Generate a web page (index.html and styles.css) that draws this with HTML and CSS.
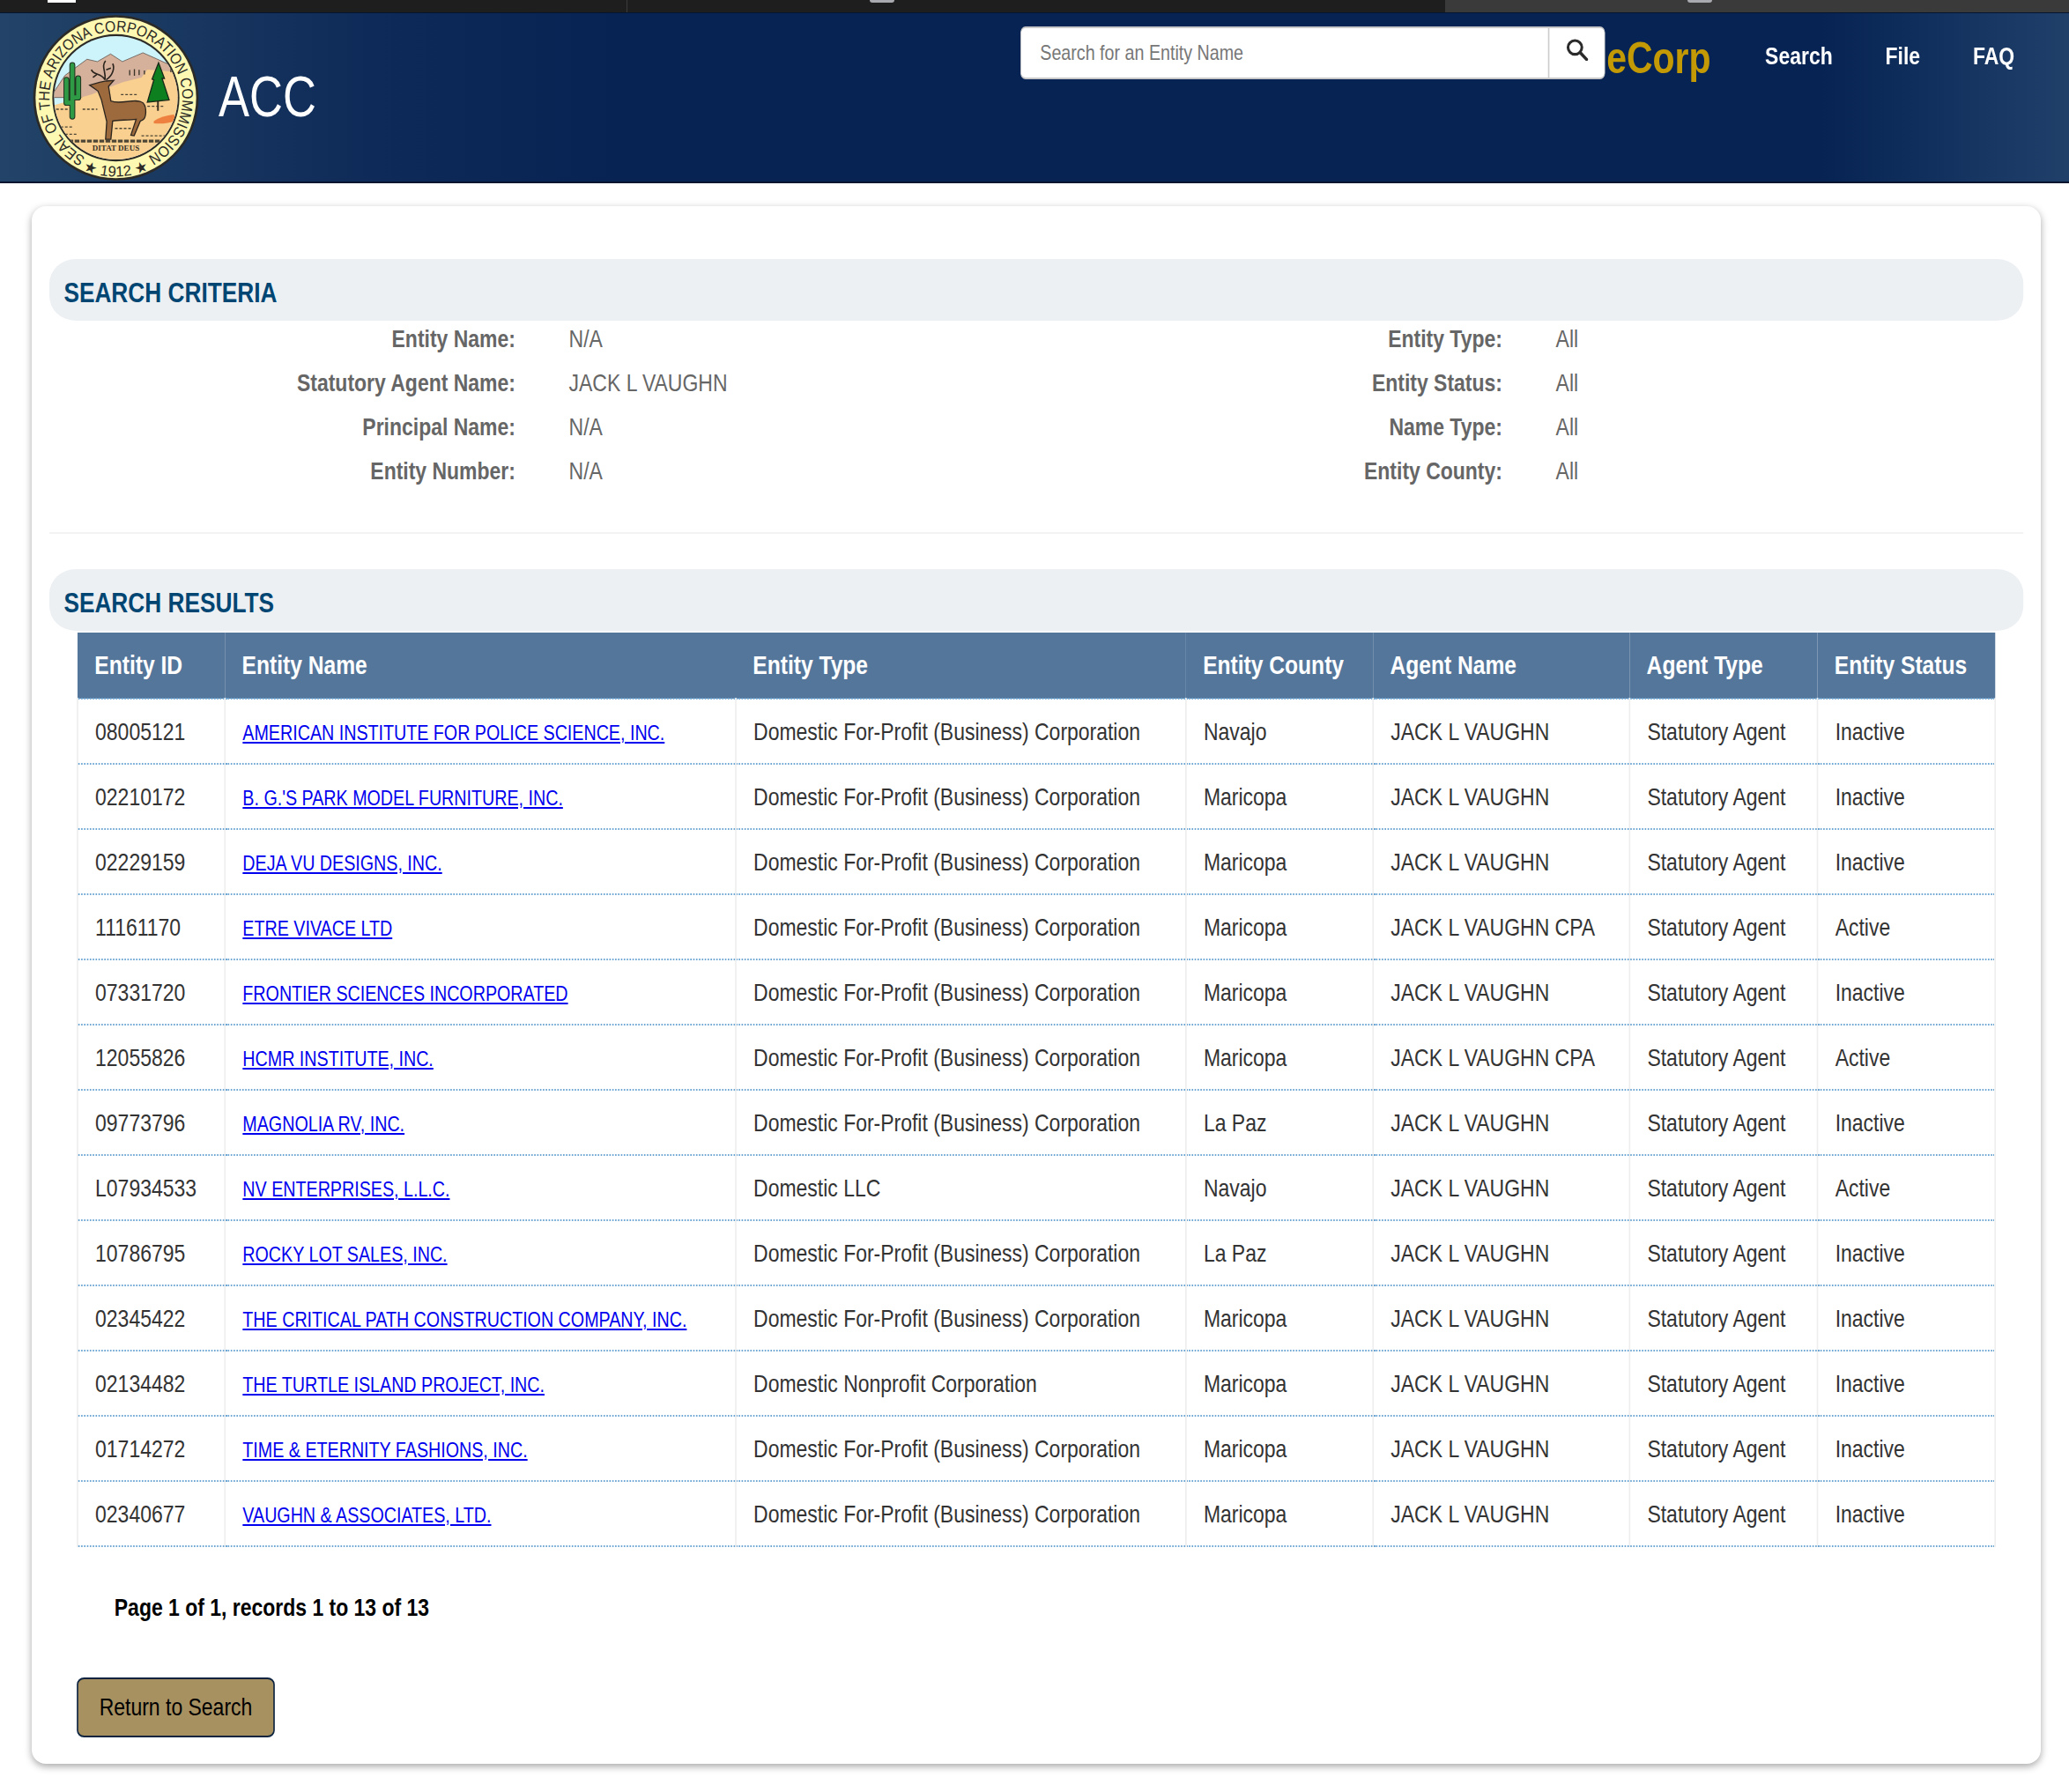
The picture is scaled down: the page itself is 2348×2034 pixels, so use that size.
FILE: index.html
```html
<!DOCTYPE html>
<html lang="en">
<head>
    <meta charset="UTF-8">
    <meta name="viewport" content="width=device-width, initial-scale=1.0">
    <title>ACC eCorp - Search Results</title>
    <link rel="stylesheet" href="styles.css">
</head>
<body>
    <div class="tabstrip">
        <div class="tab tab-first"><span class="tab-icon tab-icon-white"></span></div>
        <div class="tab tab-second"><span class="tab-icon"></span></div>
        <div class="tab tab-third"><span class="tab-icon"></span></div>
    </div>

    <header class="site-header">
        <svg class="seal" viewBox="50 20 566 562" aria-label="Seal of the Arizona Corporation Commission">
            <defs>
                <path id="ringTop" d="M 230 503 A 226 226 0 1 1 436 503"></path>
                <path id="ringBottom" d="M 199 533 A 268 268 0 0 0 467 533"></path>
                <clipPath id="scene"><circle cx="333" cy="301" r="210"></circle></clipPath>
            </defs>
            <circle cx="333" cy="301" r="281" fill="#2b2a26"></circle>
            <circle cx="333" cy="301" r="273" fill="#fdf8b2"></circle>
            <circle cx="333" cy="301" r="216" fill="#2b2a26"></circle>
            <g clip-path="url(#scene)">
                <rect x="100" y="80" width="470" height="450" fill="#cdf3fb"></rect>
                <path d="M110 300 L160 225 L235 170 L270 178 L315 152 L355 178 L425 148 L470 168 L540 200 L560 300 Z" fill="#d5b19c" stroke="#4a3b33" stroke-width="2"></path>
                <path d="M110 330 L250 290 L350 250 L440 205 L560 215 L560 530 L110 530 Z" fill="#f9d08f"></path>
                <path d="M300 262 L420 232 L440 205 L400 215 L340 235 Z" fill="#d5b19c"></path>
                <path d="M380 225v-18M396 226v-22M412 224v-18M430 222v-14M520 214v-14" stroke="#3a3428" stroke-width="4"></path>
                <path d="M130 400h60M330 405h60M130 425h70M420 430h90M350 290h60M440 330h60M130 340h40M220 340h50" stroke="#4d4535" stroke-width="4" stroke-dasharray="9 6"></path>
                <path d="M130 448 H540" stroke="#4d4535" stroke-width="10" stroke-dasharray="16 5"></path>
                <path d="M185 365 V190 M185 318 H165 V240 M185 300 H205 V235" fill="none" stroke="#22301f" stroke-width="20" stroke-linecap="round" stroke-linejoin="round"></path>
                <path d="M185 365 V190 M185 318 H165 V240 M185 300 H205 V235" fill="none" stroke="#2e9a46" stroke-width="14" stroke-linecap="round" stroke-linejoin="round"></path>
                <path d="M476 345 V300" stroke="#3b2f22" stroke-width="6"></path>
                <path d="M478 182 L498 235 L490 235 L514 308 L440 316 L462 240 L456 238 Z" fill="#0d7f1f" stroke="#1b2a18" stroke-width="4"></path>
                <path d="M462 380 Q490 362 530 358 L540 378 Q500 392 462 388 Z" fill="#ee8140"></path>
                <path d="M296 240 C282 215 255 225 250 205 M296 240 C300 210 282 195 298 175 M300 240 C322 225 330 200 322 185 M268 222 L255 232 M300 206 L316 200" fill="none" stroke="#2d261f" stroke-width="5"></path>
                <path d="M244 258 L278 248 L300 244 L326 242 L308 262 L316 312 C350 326 400 300 425 318 C440 335 436 370 424 376 L416 380 L395 430 L384 428 L402 374 C370 378 340 375 322 380 L316 442 L298 442 L302 382 L284 308 L272 278 Z" fill="#9d6a3d" stroke="#2d261f" stroke-width="4"></path>
                <text class="seal-motto" x="333" y="482" text-anchor="middle">DITAT DEUS</text>
            </g>
            <text class="seal-ring"><textPath href="#ringTop" textLength="1200" lengthAdjust="spacingAndGlyphs">SEAL OF THE ARIZONA CORPORATION COMMISSION</textPath></text>
            <text class="seal-ring seal-year"><textPath href="#ringBottom" startOffset="50%" text-anchor="middle">★ 1912 ★</textPath></text>
        </svg>
        <div class="site-title">ACC</div>
        <div class="header-right">
            <form class="search-box">
                <input class="search-input" type="text" placeholder="Search for an Entity Name">
                <button class="search-btn" type="button" aria-label="Search">
                    <svg class="search-icon" viewBox="0 0 24 24" preserveAspectRatio="none"><circle cx="10" cy="10" r="7.2" fill="none" stroke="#2b2b2b" stroke-width="2.8"></circle><path d="M15.5 15.5 L22 22.5" stroke="#2b2b2b" stroke-width="3.2" stroke-linecap="round"></path></svg>
                </button>
            </form>
            <span class="brand">eCorp</span>
            <nav class="main-nav">
                <a href="#">Search</a>
                <a href="#">File</a>
                <a href="#">FAQ</a>
            </nav>
        </div>
    </header>

    <main class="card">
        <div class="card-inner">
            <h2 class="section-title">SEARCH CRITERIA</h2>
            <div class="criteria">
                <div class="field"><span class="field-label">Entity Name:</span><span>N/A</span></div>
                <div class="field"><span class="field-label">Entity Type:</span><span>All</span></div>
                <div class="field"><span class="field-label">Statutory Agent Name:</span><span>JACK L VAUGHN</span></div>
                <div class="field"><span class="field-label">Entity Status:</span><span>All</span></div>
                <div class="field"><span class="field-label">Principal Name:</span><span>N/A</span></div>
                <div class="field"><span class="field-label">Name Type:</span><span>All</span></div>
                <div class="field"><span class="field-label">Entity Number:</span><span>N/A</span></div>
                <div class="field"><span class="field-label">Entity County:</span><span>All</span></div>
            </div>
            <hr class="divider">

            <h2 class="section-title">SEARCH RESULTS</h2>
            <table class="results">
                <colgroup>
                    <col class="col-id"><col class="col-name"><col class="col-type"><col class="col-county"><col class="col-agent"><col class="col-agent-type"><col class="col-status">
                </colgroup>
                <thead>
                    <tr><th>Entity ID</th><th>Entity Name</th><th>Entity Type</th><th>Entity County</th><th>Agent Name</th><th>Agent Type</th><th>Entity Status</th></tr>
                </thead>
                <tbody>
                    <tr><td>08005121</td><td><a href="#">AMERICAN INSTITUTE FOR POLICE SCIENCE, INC.</a></td><td>Domestic For-Profit (Business) Corporation</td><td>Navajo</td><td>JACK L VAUGHN</td><td>Statutory Agent</td><td>Inactive</td></tr>
                    <tr><td>02210172</td><td><a href="#">B. G.'S PARK MODEL FURNITURE, INC.</a></td><td>Domestic For-Profit (Business) Corporation</td><td>Maricopa</td><td>JACK L VAUGHN</td><td>Statutory Agent</td><td>Inactive</td></tr>
                    <tr><td>02229159</td><td><a href="#">DEJA VU DESIGNS, INC.</a></td><td>Domestic For-Profit (Business) Corporation</td><td>Maricopa</td><td>JACK L VAUGHN</td><td>Statutory Agent</td><td>Inactive</td></tr>
                    <tr><td>11161170</td><td><a href="#">ETRE VIVACE LTD</a></td><td>Domestic For-Profit (Business) Corporation</td><td>Maricopa</td><td>JACK L VAUGHN CPA</td><td>Statutory Agent</td><td>Active</td></tr>
                    <tr><td>07331720</td><td><a href="#">FRONTIER SCIENCES INCORPORATED</a></td><td>Domestic For-Profit (Business) Corporation</td><td>Maricopa</td><td>JACK L VAUGHN</td><td>Statutory Agent</td><td>Inactive</td></tr>
                    <tr><td>12055826</td><td><a href="#">HCMR INSTITUTE, INC.</a></td><td>Domestic For-Profit (Business) Corporation</td><td>Maricopa</td><td>JACK L VAUGHN CPA</td><td>Statutory Agent</td><td>Active</td></tr>
                    <tr><td>09773796</td><td><a href="#">MAGNOLIA RV, INC.</a></td><td>Domestic For-Profit (Business) Corporation</td><td>La Paz</td><td>JACK L VAUGHN</td><td>Statutory Agent</td><td>Inactive</td></tr>
                    <tr><td>L07934533</td><td><a href="#">NV ENTERPRISES, L.L.C.</a></td><td>Domestic LLC</td><td>Navajo</td><td>JACK L VAUGHN</td><td>Statutory Agent</td><td>Active</td></tr>
                    <tr><td>10786795</td><td><a href="#">ROCKY LOT SALES, INC.</a></td><td>Domestic For-Profit (Business) Corporation</td><td>La Paz</td><td>JACK L VAUGHN</td><td>Statutory Agent</td><td>Inactive</td></tr>
                    <tr><td>02345422</td><td><a href="#">THE CRITICAL PATH CONSTRUCTION COMPANY, INC.</a></td><td>Domestic For-Profit (Business) Corporation</td><td>Maricopa</td><td>JACK L VAUGHN</td><td>Statutory Agent</td><td>Inactive</td></tr>
                    <tr><td>02134482</td><td><a href="#">THE TURTLE ISLAND PROJECT, INC.</a></td><td>Domestic Nonprofit Corporation</td><td>Maricopa</td><td>JACK L VAUGHN</td><td>Statutory Agent</td><td>Inactive</td></tr>
                    <tr><td>01714272</td><td><a href="#">TIME &amp; ETERNITY FASHIONS, INC.</a></td><td>Domestic For-Profit (Business) Corporation</td><td>Maricopa</td><td>JACK L VAUGHN</td><td>Statutory Agent</td><td>Inactive</td></tr>
                    <tr><td>02340677</td><td><a href="#">VAUGHN &amp; ASSOCIATES, LTD.</a></td><td>Domestic For-Profit (Business) Corporation</td><td>Maricopa</td><td>JACK L VAUGHN</td><td>Statutory Agent</td><td>Inactive</td></tr>
                </tbody>
            </table>
            <p class="pager">Page 1 of 1, records 1 to 13 of 13</p>
            <button class="return-btn" type="button">Return to Search</button>
        </div>
    </main>
</body>
</html>
```

FILE: styles.css
```css
/* no condensed face is installed, so the narrow text is Liberation Sans squeezed
   with scaleX(.82); widths inside the squeezed boxes are the real px / .82 */
body {
    font-family: "Liberation Sans", Arial, sans-serif;
    font-size: 28px;
    margin: 0;
    background: #fff;
    color: #333;
}

.tabstrip {
    display: flex;
    height: 14px;
    background: #1e1e1e;
    overflow: hidden;
}

.tab {
    position: relative;
    height: 14px;
}

.tab-first {
    width: 711px;
    border-right: 1px solid #3c3c3c;
}

.tab-second {
    width: 928px;
}

.tab-third {
    flex: 1;
    background: #3a3a3a;
}

.tab-icon {
    position: absolute;
    top: 0;
    left: 275px;
    width: 28px;
    height: 3px;
    border-radius: 0 0 4px 4px;
    background: #a9a9b0;
}

.tab-icon-white {
    left: 54px;
    width: 32px;
    background: #fff;
    border-radius: 0;
}

.site-header {
    display: flex;
    align-items: flex-start;
    height: 191px;
    border-top: 1px solid #04152f;
    border-bottom: 2px solid #04152f;
    background: linear-gradient(90deg, #234468 0%, #0e2a58 18%, #062353 30%, #062353 88%, #20406a 100%);
}

.seal {
    width: 189px;
    height: 188px;
    margin: 2px 0 0 37px;
    flex-shrink: 0;
}

.seal-ring {
    font-size: 52px;
    fill: #2b2a26;
}

.seal-year {
    font-size: 50px;
}

.seal-motto {
    font-family: "Liberation Serif", serif;
    font-weight: bold;
    font-size: 27px;
    fill: #3a3428;
}

.site-title {
    margin: 57px 0 0 22px;
    font-size: 64px;
    line-height: 76px;
    color: #fff;
    transform: scaleX(.82);
    transform-origin: left top;
}

.header-right {
    display: flex;
    align-items: flex-start;
    flex-shrink: 0;
    margin-left: auto;
    padding-right: 75px;
    transform: scaleX(.82);
    transform-origin: right top;
}

.search-box {
    display: flex;
    width: 809px;
    height: 60px;
    margin-top: 15px;
    box-sizing: border-box;
    background: #fff;
    border: 1px solid #c8c8c8;
    border-top-width: 2px;
    border-bottom-width: 2px;
    border-radius: 7px;
}

.search-input {
    flex: 1;
    min-width: 0;
    padding: 0 26px;
    border: none;
    background: transparent;
    font: inherit;
    font-size: 24px;
    outline: none;
}

.search-input::placeholder {
    color: #777;
    opacity: 1;
}

.search-btn {
    width: 78px;
    padding: 0 0 5px;
    border: none;
    border-left: 2px solid #ccc;
    background: transparent;
}

.search-icon {
    width: 32px;
    height: 26px;
}

.brand {
    margin: 22px 0 0 2px;
    font-size: 50px;
    line-height: 58px;
    font-weight: bold;
    color: #c39a05;
}

.main-nav {
    display: flex;
    gap: 73px;
    margin: 32px 0 0 75px;
}

.main-nav a {
    color: #fff;
    font-weight: bold;
    text-decoration: none;
    line-height: 34px;
}

.card {
    margin: 26px 32px 32px 36px;
    height: 1768px;
    box-sizing: border-box;
    padding: 60px 20px 0;
    border-radius: 16px;
    background: #fff;
    box-shadow: 0 3px 8px rgba(0, 0, 0, 0.35);
}

.card-inner {
    width: calc(100% / .82);
    transform: scaleX(.82);
    transform-origin: left top;
}

.section-title {
    margin: 0;
    height: 70px;
    box-sizing: border-box;
    padding: 18px 20px 0;
    border-radius: 36px / 28px;
    background: #edf0f3;
    color: #004673;
    font-size: 32px;
    line-height: 40px;
}

.criteria {
    display: grid;
    grid-template-columns: 1fr 1fr;
    grid-auto-rows: 50px;
    height: 240px;
    color: #666;
}

.field {
    display: grid;
    grid-template-columns: 645px 1fr;
    column-gap: 74px;
    line-height: 42px;
}

.field-label {
    text-align: right;
    font-weight: bold;
}

.divider {
    height: 2px;
    margin: 0 0 40px;
    border: none;
    background: #f3f3f3;
}

.results {
    width: 2654px;
    margin: 2px 0 0 37.5px;
    border-collapse: collapse;
    table-layout: fixed;
    white-space: nowrap;
}

.col-id { width: 204px; }
.col-name { width: 707px; }
.col-type { width: 623px; }
.col-county { width: 259px; }
.col-agent { width: 355px; }
.col-agent-type { width: 260px; }
.col-status { width: 246px; }

.results th {
    height: 74px;
    padding: 0 24px;
    background: #54769b;
    color: #fff;
    font-size: 30px;
    text-align: left;
    border-bottom: 2px dotted #6ea7d4;
}

.results td {
    height: 71px;
    padding: 1px 24px 0;
    border-left: 2px solid #eee;
    border-right: 2px solid #eee;
    border-bottom: 2px dotted #6ea7d4;
}

.results a {
    color: #0000ee;
    font-size: 24px;
}

.pager {
    margin: 51px 0 0 90px;
    color: #000;
    font-weight: bold;
    line-height: 36px;
}

.return-btn {
    display: block;
    width: 274px;
    height: 68px;
    margin: 61px 0 0 38px;
    padding: 0;
    border: 2px solid #0c2340;
    border-radius: 10px / 8px;
    background: #a89160;
    color: #000;
    font: inherit;
}
```
